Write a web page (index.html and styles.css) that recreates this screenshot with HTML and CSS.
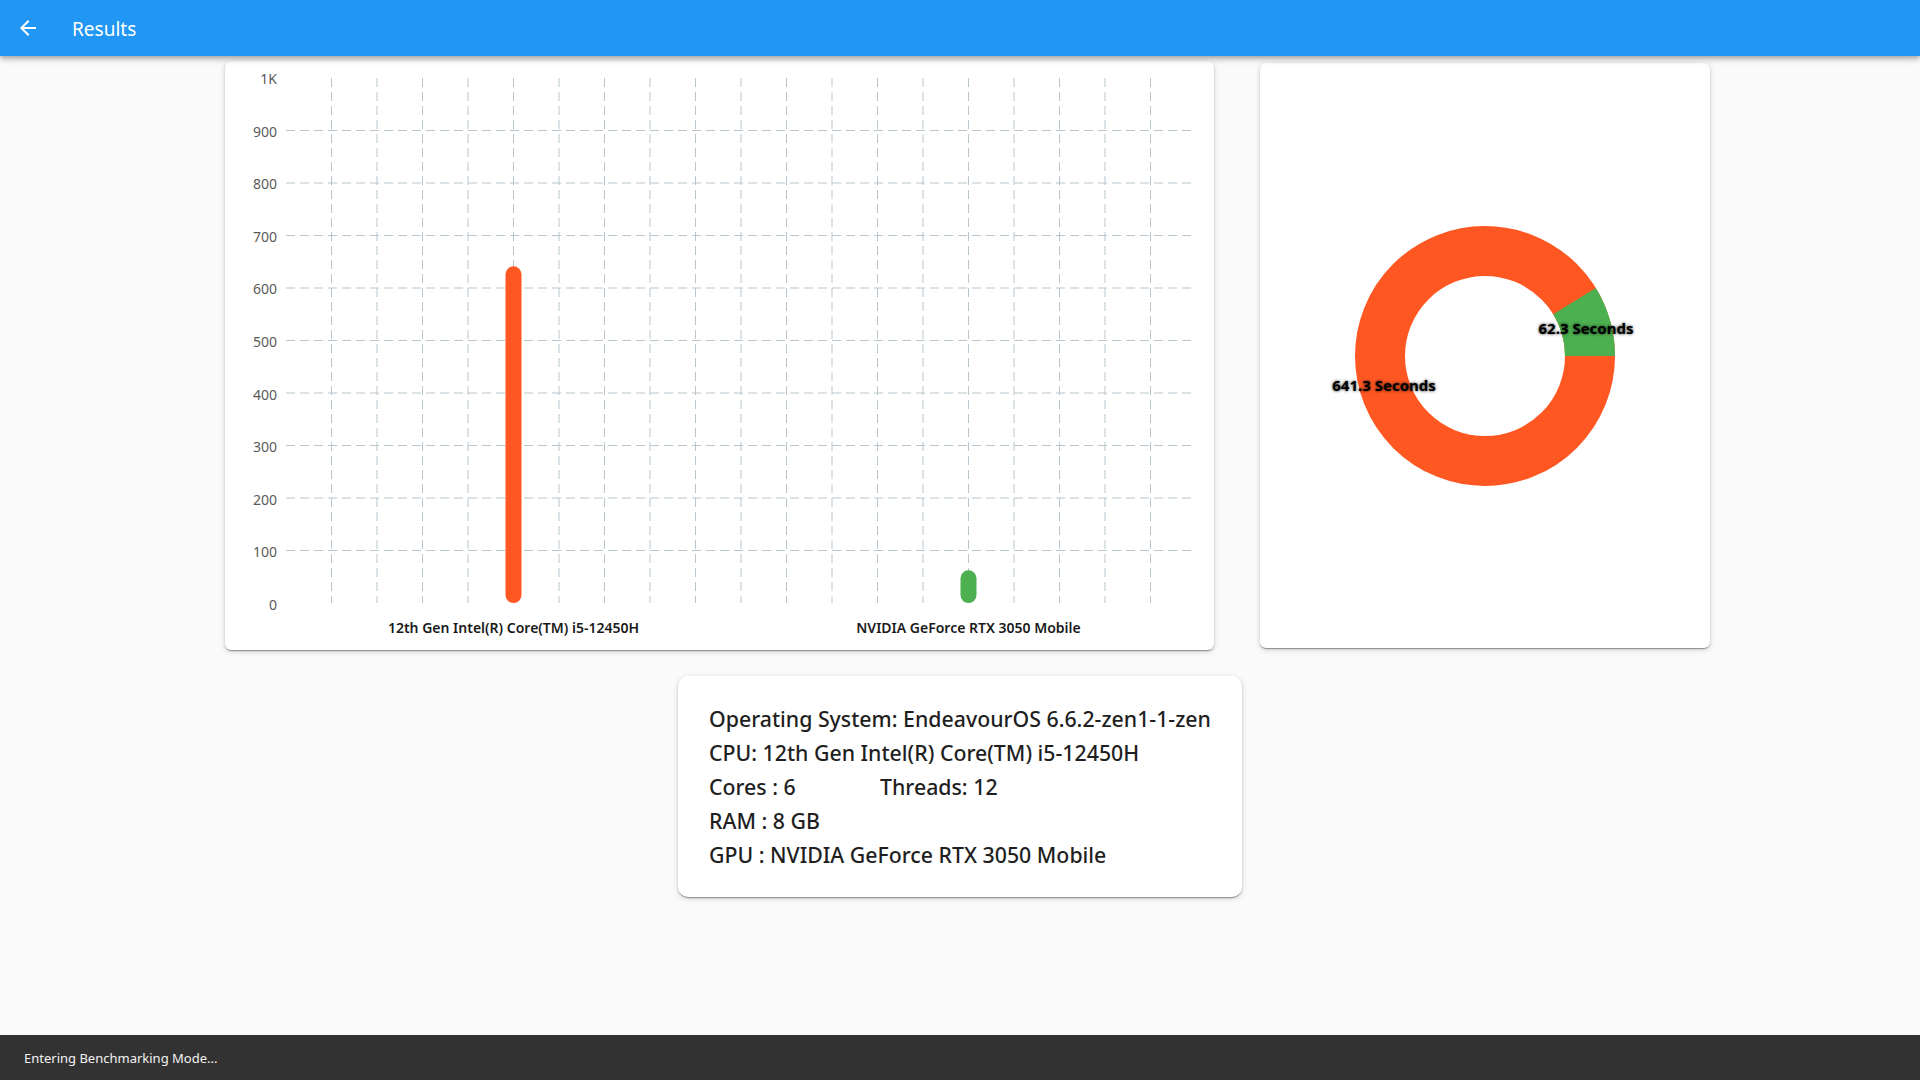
FILE: index.html
```html
<!DOCTYPE html>
<html lang="en">
<head>
<meta charset="utf-8">
<title>Results</title>
<link rel="stylesheet" href="styles.css">
</head>
<body>
<header class="appbar">
  <button class="back" aria-label="Back">
    <svg viewBox="0 0 24 24" width="24" height="24"><path fill="#fff" d="M20 11H7.83l5.59-5.59L12 4l-8 8 8 8 1.41-1.41L7.83 13H20v-2z"/></svg>
  </button>
  <h1 class="title">Results</h1>
</header>

<main class="content">
  <section class="charts-row">
    <div class="card bar-card">
      <div class="y-axis">
        <span class="tick">1K</span>
        <span class="tick">900</span>
        <span class="tick">800</span>
        <span class="tick">700</span>
        <span class="tick">600</span>
        <span class="tick">500</span>
        <span class="tick">400</span>
        <span class="tick">300</span>
        <span class="tick">200</span>
        <span class="tick">100</span>
        <span class="tick">0</span>
      </div>
      <svg class="plot" width="910" height="525" viewBox="0 0 910 525">
        <g class="grid-h">
          <line x1="0" x2="910" y1="52.5" y2="52.5"/>
          <line x1="0" x2="910" y1="105" y2="105"/>
          <line x1="0" x2="910" y1="157.5" y2="157.5"/>
          <line x1="0" x2="910" y1="210" y2="210"/>
          <line x1="0" x2="910" y1="262.5" y2="262.5"/>
          <line x1="0" x2="910" y1="315" y2="315"/>
          <line x1="0" x2="910" y1="367.5" y2="367.5"/>
          <line x1="0" x2="910" y1="420" y2="420"/>
          <line x1="0" x2="910" y1="472.5" y2="472.5"/>
        </g>
        <g class="grid-v">
          <line x1="45.5" x2="45.5" y1="0" y2="525"/>
          <line x1="91" x2="91" y1="0" y2="525"/>
          <line x1="136.5" x2="136.5" y1="0" y2="525"/>
          <line x1="182" x2="182" y1="0" y2="525"/>
          <line x1="227.5" x2="227.5" y1="0" y2="525"/>
          <line x1="273" x2="273" y1="0" y2="525"/>
          <line x1="318.5" x2="318.5" y1="0" y2="525"/>
          <line x1="364" x2="364" y1="0" y2="525"/>
          <line x1="409.5" x2="409.5" y1="0" y2="525"/>
          <line x1="455" x2="455" y1="0" y2="525"/>
          <line x1="500.5" x2="500.5" y1="0" y2="525"/>
          <line x1="546" x2="546" y1="0" y2="525"/>
          <line x1="591.5" x2="591.5" y1="0" y2="525"/>
          <line x1="637" x2="637" y1="0" y2="525"/>
          <line x1="682.5" x2="682.5" y1="0" y2="525"/>
          <line x1="728" x2="728" y1="0" y2="525"/>
          <line x1="773.5" x2="773.5" y1="0" y2="525"/>
          <line x1="819" x2="819" y1="0" y2="525"/>
          <line x1="864.5" x2="864.5" y1="0" y2="525"/>
        </g>
        <rect class="bar-cpu" x="219.5" y="188.3" width="16" height="336.7" rx="8" ry="8"/>
        <rect class="bar-gpu" x="674.5" y="492.3" width="16" height="32.7" rx="8" ry="8"/>
      </svg>
      <div class="x-axis">
        <span class="x-label">12th Gen Intel(R) Core(TM) i5-12450H</span>
        <span class="x-label">NVIDIA GeForce RTX 3050 Mobile</span>
      </div>
    </div>

    <div class="card pie-card">
      <div class="pie">
        <svg width="260" height="260" viewBox="0 0 260 260">
          <circle class="ring-cpu" cx="130" cy="130" r="105"/>
          <circle class="ring-gpu" cx="130" cy="130" r="105" stroke-dasharray="58.41 601.32" stroke-dashoffset="-601.32"/>
        </svg>
        <span class="pie-label" style="left:29px;top:159px">641.3 Seconds</span>
        <span class="pie-label" style="left:231px;top:102px">62.3 Seconds</span>
      </div>
    </div>
  </section>

  <section class="card info-card">
    <p class="info-line">Operating System: EndeavourOS 6.6.2-zen1-1-zen</p>
    <p class="info-line">CPU: 12th Gen Intel(R) Core(TM) i5-12450H</p>
    <p class="info-line info-split"><span class="cores">Cores : 6</span><span>Threads: 12</span></p>
    <p class="info-line">RAM : 8 GB</p>
    <p class="info-line">GPU : NVIDIA GeForce RTX 3050 Mobile</p>
  </section>
</main>

<footer class="snackbar">Entering Benchmarking Mode...</footer>
</body>
</html>
```

FILE: styles.css
```css
* { box-sizing: border-box; }

html, body {
  margin: 0;
  padding: 0;
  height: 100%;
}

body {
  background: #fafafa;
  font-family: "Noto Sans", "Open Sans", sans-serif;
  color: #212121;
  width: 1920px;
  height: 1080px;
  overflow: hidden;
  display: flex;
  flex-direction: column;
}

.appbar {
  height: 56px;
  flex: 0 0 56px;
  background: #2196f3;
  display: flex;
  align-items: center;
  padding-left: 16px;
  box-shadow: 0 2px 4px -1px rgba(0,0,0,0.2), 0 4px 5px 0 rgba(0,0,0,0.14), 0 1px 10px 0 rgba(0,0,0,0.12);
  position: relative;
  z-index: 2;
}

.back {
  width: 24px;
  height: 24px;
  padding: 0;
  border: 0;
  background: none;
  display: flex;
}

.title {
  margin: 2px 0 0 32px;
  font-size: 19px;
  font-weight: 400;
  color: #fff;
  line-height: 24px;
}

.content {
  flex: 1;
  display: flex;
  flex-direction: column;
}

.charts-row {
  display: flex;
  align-items: center;
  gap: 46px;
  padding-left: 225px;
  margin-top: 5px;
}

.card {
  background: #fff;
  border-radius: 6px;
  box-shadow: 0 2px 1px -1px rgba(0,0,0,0.2), 0 1px 1px 0 rgba(0,0,0,0.14), 0 1px 3px 0 rgba(0,0,0,0.12), 0 2px 6px rgba(0,0,0,0.12);
}

.bar-card {
  width: 989px;
  height: 589px;
  padding: 17px 18px 13px 16px;
  display: grid;
  grid-template-columns: 36px 910px;
  grid-template-rows: 525px 19px;
  column-gap: 9px;
  row-gap: 15px;
}

.y-axis {
  display: flex;
  flex-direction: column;
  justify-content: space-between;
  align-items: flex-end;
  padding-top: 1px;
  margin-bottom: -2px;
}

.tick {
  height: 0;
  display: flex;
  align-items: center;
  font-size: 14px;
  color: #5a5a5a;
  line-height: 16px;
}

.plot { display: block; }

.grid-h line, .grid-v line {
  stroke: #b9c6cd;
  stroke-width: 1;
  stroke-dasharray: 9 5;
}

.bar-cpu { fill: #ff5722; }
.bar-gpu { fill: #4caf50; }

.x-axis {
  grid-column: 2;
  display: flex;
}

.x-label {
  flex: 1;
  text-align: center;
  font-size: 14px;
  font-weight: 600;
  line-height: 19px;
  color: #1a1a1a;
}

.pie-card {
  width: 450px;
  height: 585px;
  display: flex;
  align-items: center;
  justify-content: center;
}

.pie {
  position: relative;
  width: 260px;
  height: 260px;
}

.pie svg { display: block; }

.ring-cpu, .ring-gpu {
  fill: none;
  stroke-width: 50;
}
.ring-cpu { stroke: #ff5722; }
.ring-gpu { stroke: #4caf50; }

.pie-label {
  position: absolute;
  transform: translate(-50%, -50%);
  white-space: nowrap;
  font-size: 15px;
  font-weight: 700;
  color: #000;
  text-shadow: 0 0 3px rgba(0,0,0,0.9);
  line-height: 20px;
}

.info-card {
  align-self: center;
  width: 564px;
  height: 221px;
  margin-top: 26px;
  padding: 26px 20px 25px 31px;
  border-radius: 10px;
}

.info-line {
  margin: 0;
  font-size: 21.3px;
  font-weight: 500;
  line-height: 34px;
  color: #1f1f1f;
  white-space: nowrap;
}

.info-split { display: flex; }
.cores { width: 171px; }

.snackbar {
  margin-top: auto;
  height: 45px;
  flex: 0 0 45px;
  background: #323232;
  color: #f2f2f2;
  font-size: 13px;
  display: flex;
  align-items: center;
  padding-left: 24px;
}
```
